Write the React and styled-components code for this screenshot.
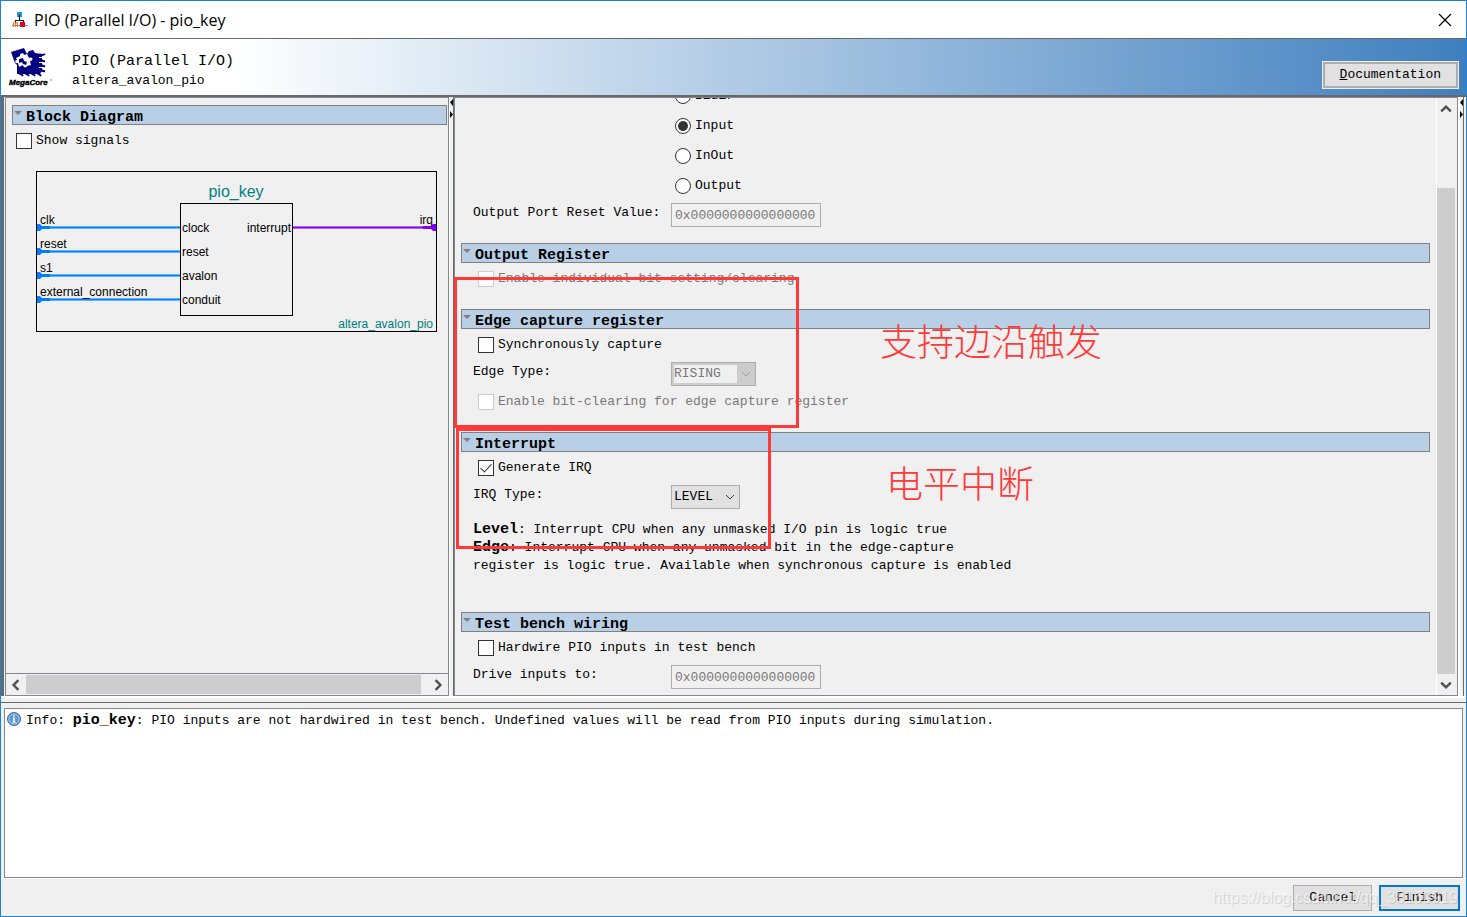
import React, { useState } from 'react';
import styled, { createGlobalStyle } from 'styled-components';

const COLORS = {
  frame: '#1883d7',
  panel: '#f0f0f0',
  dark: '#696969',
  line: '#828790',
  header: '#b8cfe5',
  headerLine: '#808080',
  disabled: '#787878',
  thumb: '#cdcdcd',
  mark: '#ff3838',
  teal: '#008080',
  blue: '#0080ff',
  purple: '#8000ff',
  navy: '#000080'
};

const FONTS = {
  mono: '"Liberation Mono", "Courier New", monospace',
  title: '"Open Sans", "Noto Sans", sans-serif',
  sans: '"Liberation Sans", Arial, sans-serif',
  cjk: '"Noto Sans CJK SC", sans-serif'
};

const GlobalStyle = createGlobalStyle`
  * {
    box-sizing: border-box;
  }
  body {
    margin: 0;
    color: #000;
    font: 13px/20px ${FONTS.mono};
  }
  button, input, select {
    font: inherit;
    color: inherit;
    margin: 0;
  }
`;

const Window = styled.div`
  position: relative;
  display: flex;
  flex-direction: column;
  min-height: 100vh;
  border: 1px solid ${COLORS.frame};
  background: ${COLORS.panel};
  overflow: hidden;
`;

const TitleBar = styled.div`
  display: flex;
  align-items: center;
  height: 37px;
  padding: 0 14px 0 11px;
  background: #fff;
`;

const TitleText = styled.h1`
  flex: 1;
  margin: 0 0 0 6px;
  font: 400 16px/20px ${FONTS.title};
`;

const CloseButton = styled.button`
  display: flex;
  padding: 0;
  border: none;
  background: none;
`;

const Banner = styled.header`
  display: flex;
  align-items: flex-end;
  height: 57px;
  padding: 0 8px 7px 7px;
  border-top: 1px solid ${COLORS.dark};
  background: linear-gradient(to right, #fff 16%, #3f7fbf);
`;

const BannerText = styled.div`
  flex: 1;
  align-self: flex-start;
  padding: 13px 0 0 20px;
`;

const BannerName = styled.div`
  font-size: 15px;
  line-height: 20px;
`;

const BannerKind = styled.div`
  line-height: 18px;
`;

const Button = styled.button`
  padding: 0 15px;
  height: 26px;
  border: 1px solid #adadad;
  background: #e1e1e1;
  &::first-letter {
    text-decoration: ${props => (props.$mnemonic ? 'underline' : 'none')};
  }
`;

const DocButton = styled(Button)`
  border: 2px solid #adadad;
  outline: 1px solid #f0f0f0;
`;

const FinishButton = styled(Button)`
  border: 2px solid #0078d7;
`;

const Main = styled.main`
  flex: 1;
  display: flex;
  min-height: 0;
  padding-left: 1px;
  border-left: 3px solid ${COLORS.dark};
  border-top: 2px solid ${COLORS.dark};
`;

const BlockPanel = styled.section`
  flex: 0 0 444px;
  display: flex;
  flex-direction: column;
  border: 1px solid ${COLORS.line};
`;

const BlockContent = styled.div`
  flex: 1;
  padding: 7px 1px 0 6px;
`;

const Splitter = styled.div`
  display: flex;
  flex: 0 0 5px;
  justify-content: center;
  border-left: 1px solid #fff;
  border-right: 1px solid ${COLORS.dark};
`;

const RightSplitter = styled(Splitter)`
  flex: 0 0 6px;
  border-left-width: 2px;
  margin-right: 2px;
`;

const ParamPanel = styled.section`
  flex: 1;
  min-width: 0;
  display: flex;
  border: 1px solid ${COLORS.line};
`;

/* content stays scrolled to its end */
const ParamView = styled.div`
  flex: 1;
  min-width: 0;
  height: 597px;
  display: flex;
  flex-direction: column;
  justify-content: flex-end;
  padding: 0 6px 6px 6px;
  overflow: hidden;
`;

const SectionHeader = styled.h2`
  display: flex;
  gap: 4px;
  height: 20px;
  margin: 0;
  padding: 2px 0 0 1px;
  border: 1px solid ${COLORS.headerLine};
  background: ${COLORS.header};
  font-size: 15px;
  line-height: 20px;
`;

const Arrow = styled.svg`
  flex: none;
  margin-top: 3px;
`;

const SectionBody = styled.div`
  display: flex;
  flex-direction: column;
  gap: 8px;
  padding: 8px 0 ${props => props.$bottom || 0}px 12px;
`;

const CheckRow = styled.label`
  display: flex;
  align-items: center;
  gap: 4px;
  height: 16px;
  padding-left: ${props => props.$indent || 0}px;
  color: ${props => (props.$disabled ? COLORS.disabled : '#000')};
`;

const CheckInput = styled.input`
  appearance: none;
  flex: none;
  display: flex;
  justify-content: center;
  width: 16px;
  height: 16px;
  border: 1px solid #333;
  background: #fff;
  &:disabled {
    border-color: #ccc;
  }
  &:checked::after {
    content: '';
    width: 5px;
    height: 10px;
    border: solid #333;
    border-width: 0 1px 1px 0;
    transform: rotate(42deg);
  }
`;

const RadioInput = styled(CheckInput)`
  border-radius: 50%;
  align-items: center;
  &:checked::after {
    width: 10px;
    height: 10px;
    border: none;
    border-radius: 50%;
    background: #333;
  }
`;

const RadioGroup = styled.div`
  display: flex;
  flex-direction: column;
  gap: 14px;
  padding-left: 202px;
`;

const FieldRow = styled.div`
  display: flex;
  align-items: flex-start;
  padding-top: 1px;
`;

const FieldLabel = styled.label`
  flex: 0 0 198px;
`;

const TextInput = styled.input`
  width: 150px;
  height: 24px;
  padding: 0 3px;
  border: 1px solid #abadb3;
  background: ${COLORS.panel};
  color: ${COLORS.disabled};
`;

const SelectBox = styled.div`
  display: flex;
  align-items: center;
  justify-content: space-between;
  width: ${props => props.$width}px;
  height: 24px;
  padding: 2px 4px 2px 2px;
  border: 1px solid #adadad;
  background: ${props => (props.$disabled ? '#ccc' : '#e1e1e1')};
  color: ${props => (props.$disabled ? COLORS.disabled : '#000')};
`;

const SelectInput = styled.select`
  appearance: none;
  flex: 1;
  min-width: 0;
  height: 18px;
  margin-right: 4px;
  padding: 0;
  border: none;
  border-radius: 0;
  background: none;
  line-height: 18px;
  &:disabled {
    background: ${COLORS.panel};
    opacity: 1;
  }
`;

const HelpText = styled.p`
  margin: 4px 0 0;
  line-height: 18px;
`;

const Strong = styled.b`
  font-size: 15px;
  line-height: 18px;
`;

const ShowSignals = styled.div`
  padding: 8px 0 0 4px;
`;

const Diagram = styled.svg`
  display: block;
  margin: 22px 0 0 24px;
  font-family: ${FONTS.sans};
  font-size: 12px;
`;

const HScroll = styled.div`
  display: flex;
  height: 22px;
  padding: 1px 0;
  border-top: 1px solid ${COLORS.line};
`;

const VScroll = styled.div`
  flex: 0 0 21px;
  display: flex;
  flex-direction: column;
  padding-right: 2px;
  border-left: 1px solid #fff;
`;

const ScrollButton = styled.button`
  flex: 0 0 ${props => props.$size || 21}px;
  display: flex;
  align-items: center;
  justify-content: center;
  padding: 0;
  border: none;
  background: none;
`;

const Thumb = styled.div`
  flex: 1;
  background: ${COLORS.thumb};
`;

const ScrollGap = styled.div`
  flex: 0 0 ${props => props.$size}px;
`;

const Messages = styled.section`
  padding: 5px 3px 0 3px;
  border-top: 1px solid ${COLORS.dark};
`;

const Rule = styled.div`
  height: 6px;
  border-top: 2px solid #fff;
`;

const MessageBox = styled.div`
  height: 170px;
  padding: 2px;
  border: 1px solid ${COLORS.line};
  background: #fff;
`;

const Message = styled.div`
  display: flex;
  align-items: flex-start;
  gap: 5px;
`;

const Footer = styled.footer`
  display: flex;
  justify-content: flex-end;
  gap: 7px;
  padding: 6px 6px 5px;
  border-top: 1px solid #fff;
`;

const MarkBox = styled.div`
  position: absolute;
  left: ${props => props.$x}px;
  top: ${props => props.$y}px;
  width: ${props => props.$w}px;
  height: ${props => props.$h}px;
  border: 3px solid ${COLORS.mark};
  pointer-events: none;
`;

const MarkText = styled.div`
  position: absolute;
  left: ${props => props.$x}px;
  top: ${props => props.$y}px;
  color: ${COLORS.mark};
  font: 300 37px/44px ${FONTS.cjk};
  white-space: nowrap;
  pointer-events: none;
`;

const Watermark = styled.div`
  position: absolute;
  right: 8px;
  bottom: 8px;
  color: rgba(255, 255, 255, 0.6);
  font: 16px/20px ${FONTS.sans};
  text-shadow: 1px 1px 1px rgba(0, 0, 0, 0.15);
  pointer-events: none;
`;

const AppIcon = () => (
  <svg width="16" height="16" viewBox="0 0 16 16" aria-hidden="true">
    <path d="M5 0h5v5H5z" fill="#1e9be8" />
    <path d="M7.5 2v6.5M3.5 11V8.5h8V11" fill="none" stroke="#222" strokeWidth="1.2" />
    <path d="M0 13.5h16" stroke="#888" />
    <path d="M1.5 15v-4h2v4m0-4h2v4" fill="none" stroke="#f08030" strokeWidth="1.2" />
    <path d="M8 10h5v5H8z" fill="#e0002a" />
  </svg>
);

const MegaCoreLogo = () => (
  <svg width="44" height="42" viewBox="0 0 44 42" role="img" aria-label="MegaCore">
    <path d="M3 6l13-4 3 6 2-3 4-1 2 3 7 1v17l-2 3H9v-9l-2-2z" fill={COLORS.navy} />
    <g fill="none" stroke={COLORS.navy} strokeWidth="2">
      <path d="M32 9c2-1 2 1 5-1M32 14c2-1 2 2 5 1M32 19c2-1 2 2 5 1M32 24c2-1 2 2 5 1" />
      <path d="M11 26c0 3 2 1 4 4M17 26c0 3 2 1 4 4M23 26c0 3 2 1 4 4M29 26c0 3 2 1 4 4" />
    </g>
    <path d="M34 11.5h-3M34 16.5h-3M34 21.5h-3" stroke="#fff" />
    <path d="M8 12l4-2c-1-3 4-4 4-1l3-1 2 4c4-2 5 3 1 3l1 4-4 1c0 2-4 2-4-1l-4 2-1-4c-3 1-4-3-1-3z" fill="#fff" />
    <path d="M11 13l4-1 1 3 3 1-1 3-3-1-1-2-3 1z" fill={COLORS.navy} />
    <text x="1" y="39" fontFamily={FONTS.sans} fontSize="8" fontWeight="700" fontStyle="italic" stroke="#000" strokeWidth=".4">
      MegaCore
    </text>
    <circle cx="43" cy="34" r=".7" fill="#555" />
  </svg>
);

const InfoIcon = () => (
  <svg width="14" height="16" viewBox="0 0 14 16" aria-hidden="true">
    <circle cx="7" cy="8" r="6.5" fill="#4a86c4" stroke="#3c6ea5" />
    <circle cx="7" cy="8" r="5.2" fill="#5f9ad3" stroke="#c9def2" strokeWidth=".8" />
    <path d="M7 4.2v1.6M6 7.3h1v3.5M5.6 11h2.9" fill="none" stroke="#fff" strokeWidth="1.4" />
  </svg>
);

const CHEVRONS = {
  up: 'M1 7l4-4 4 4',
  down: 'M1 3l4 4 4-4',
  left: 'M7 1L3 5l4 4',
  right: 'M3 1l4 4-4 4'
};

const Chevron = ({ dir, color = '#505050', width = 2, size = 10 }) => (
  <svg width={size} height={size} viewBox="0 0 10 10" aria-hidden="true">
    <path d={CHEVRONS[dir]} fill="none" stroke={color} strokeWidth={width} />
  </svg>
);

const SplitArrows = () => (
  <svg width="3" height="22" viewBox="0 0 3 22" aria-hidden="true">
    <path d="M3 2v7L0 5.5zM0 14v7l3-3.5z" />
  </svg>
);

const Header = ({ children }) => (
  <SectionHeader>
    <Arrow width="8" height="5" viewBox="0 0 8 5">
      <path d="M0 0h8L4 4z" fill="#808080" />
    </Arrow>
    {children}
  </SectionHeader>
);

const Check = ({ label, indent = 5, disabled, defaultChecked }) => (
  <CheckRow $indent={indent} $disabled={disabled}>
    <CheckInput type="checkbox" disabled={disabled} defaultChecked={defaultChecked} />
    {label}
  </CheckRow>
);

const Field = ({ id, label }) => (
  <FieldRow>
    <FieldLabel htmlFor={id}>{label}</FieldLabel>
    <TextInput id={id} defaultValue="0x0000000000000000" disabled />
  </FieldRow>
);

const SelectField = ({ id, label, options, width, disabled }) => (
  <FieldRow>
    <FieldLabel htmlFor={id}>{label}</FieldLabel>
    <SelectBox $width={width} $disabled={disabled}>
      <SelectInput id={id} disabled={disabled}>
        {options.map(option => (
          <option key={option}>{option}</option>
        ))}
      </SelectInput>
      <Chevron dir="down" width={1} color={disabled ? '#a0a0a0' : '#404040'} />
    </SelectBox>
  </FieldRow>
);

const PORTS = [
  { name: 'clk', type: 'clock' },
  { name: 'reset', type: 'reset' },
  { name: 's1', type: 'avalon' },
  { name: 'external_connection', type: 'conduit' }
];

const BlockDiagram = () => (
  <Diagram width="401" height="161" viewBox="0 0 401 161">
    <rect x=".5" y=".5" width="400" height="160" fill="none" stroke="#000" />
    <rect x="144.5" y="32.5" width="112" height="112" fill="none" stroke="#000" />
    <text x="200" y="26" fontSize="16" textAnchor="middle" fill={COLORS.teal}>
      pio_key
    </text>
    {PORTS.map(({ name, type }, i) => (
      <g key={name} transform={`translate(0 ${56 + i * 24})`}>
        <path d="M1 .5h143" stroke="#66b3ff" strokeWidth="3" />
        <path d="M1 .5h143" stroke={COLORS.blue} />
        <path d="M1-3h3l2 2h8v3H6L4 4H1z" fill={COLORS.blue} />
        <text x="4" y="-3">{name}</text>
        <text x="146" y="5">{type}</text>
      </g>
    ))}
    <path d="M257 56.5h143" stroke="#b366ff" strokeWidth="3" />
    <path d="M257 56.5h143" stroke={COLORS.purple} />
    <path d="M400 53h-3l-2 2h-8v3h8l2 2h3z" fill={COLORS.purple} />
    <text x="397" y="53" textAnchor="end">irq</text>
    <text x="255" y="61" textAnchor="end">interrupt</text>
    <text x="397" y="157" textAnchor="end" fill={COLORS.teal}>
      altera_avalon_pio
    </text>
  </Diagram>
);

const DIRECTIONS = ['Bidir', 'Input', 'InOut', 'Output'];

const Parameters = () => {
  const [direction, setDirection] = useState('Input');
  return (
    <ParamView>
      <SectionBody $bottom={16}>
        <RadioGroup role="radiogroup" aria-label="Direction">
          {DIRECTIONS.map(name => (
            <CheckRow key={name}>
              <RadioInput
                type="radio"
                name="direction"
                checked={direction === name}
                onChange={() => setDirection(name)}
              />
              {name}
            </CheckRow>
          ))}
        </RadioGroup>
        <Field id="reset-value" label="Output Port Reset Value:" />
      </SectionBody>
      <Header>Output Register</Header>
      <SectionBody $bottom={22}>
        <Check label="Enable individual bit setting/clearing" disabled />
      </SectionBody>
      <Header>Edge capture register</Header>
      <SectionBody $bottom={22}>
        <Check label="Synchronously capture" />
        <SelectField id="edge-type" label="Edge Type:" options={['RISING', 'FALLING', 'ANY']} width={85} disabled />
        <Check label="Enable bit-clearing for edge capture register" disabled />
      </SectionBody>
      <Header>Interrupt</Header>
      <SectionBody $bottom={37}>
        <Check label="Generate IRQ" defaultChecked />
        <SelectField id="irq-type" label="IRQ Type:" options={['LEVEL', 'EDGE']} width={69} />
        <HelpText>
          <Strong>Level</Strong>: Interrupt CPU when any unmasked I/O pin is logic true
          <br />
          <Strong>Edge</Strong>: Interrupt CPU when any unmasked bit in the edge-capture
          <br />
          register is logic true. Available when synchronous capture is enabled
        </HelpText>
      </SectionBody>
      <Header>Test bench wiring</Header>
      <SectionBody>
        <Check label="Hardwire PIO inputs in test bench" />
        <Field id="drive-inputs" label="Drive inputs to:" />
      </SectionBody>
    </ParamView>
  );
};

const App = () => (
  <React.Fragment>
    <GlobalStyle />
    <Window>
      <TitleBar>
        <AppIcon />
        <TitleText>PIO (Parallel I/O) - pio_key</TitleText>
        <CloseButton aria-label="Close">
          <svg width="14" height="14" viewBox="0 0 14 14">
            <path d="M1 1l12 12M13 1L1 13" stroke="#000" strokeWidth="1.2" />
          </svg>
        </CloseButton>
      </TitleBar>
      <Banner>
        <MegaCoreLogo />
        <BannerText>
          <BannerName>PIO (Parallel I/O)</BannerName>
          <BannerKind>altera_avalon_pio</BannerKind>
        </BannerText>
        <DocButton $mnemonic>Documentation</DocButton>
      </Banner>
      <Main>
        <BlockPanel>
          <BlockContent>
            <Header>Block Diagram</Header>
            <ShowSignals>
              <Check label="Show signals" indent={0} />
            </ShowSignals>
            <BlockDiagram />
          </BlockContent>
          <HScroll>
            <ScrollButton $size={20} aria-label="Scroll left">
              <Chevron dir="left" size={12} />
            </ScrollButton>
            <Thumb />
            <ScrollGap $size={6} />
            <ScrollButton aria-label="Scroll right">
              <Chevron dir="right" size={12} />
            </ScrollButton>
          </HScroll>
        </BlockPanel>
        <Splitter>
          <SplitArrows />
        </Splitter>
        <ParamPanel>
          <Parameters />
          <VScroll>
            <ScrollButton aria-label="Scroll up">
              <Chevron dir="up" size={12} />
            </ScrollButton>
            <ScrollGap $size={69} />
            <Thumb />
            <ScrollButton aria-label="Scroll down">
              <Chevron dir="down" size={12} />
            </ScrollButton>
          </VScroll>
        </ParamPanel>
        <RightSplitter>
          <SplitArrows />
        </RightSplitter>
      </Main>
      <Rule />
      <Messages>
        <MessageBox>
          <Message>
            <InfoIcon />
            <span>
              Info: <Strong>pio_key</Strong>: PIO inputs are not hardwired in test bench. Undefined values will be read
              from PIO inputs during simulation.
            </span>
          </Message>
        </MessageBox>
      </Messages>
      <Footer>
        <Button>Cancel</Button>
        <FinishButton>Finish</FinishButton>
      </Footer>
      <MarkBox $x={453} $y={276} $w={345} $h={151} />
      <MarkBox $x={455} $y={427} $w={315} $h={121} />
      <MarkText $x={879} $y={317}>支持边沿触发</MarkText>
      <MarkText $x={885} $y={459}>电平中断</MarkText>
      <Watermark>https://blog.csdn.net/qq_38160919</Watermark>
    </Window>
  </React.Fragment>
);

export default App;
